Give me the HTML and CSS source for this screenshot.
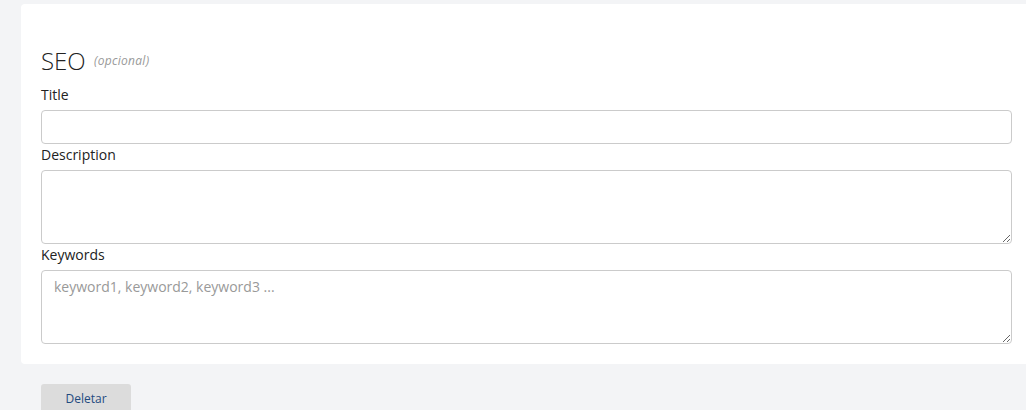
FILE: index.html
```html
<!DOCTYPE html>
<html lang="pt">
<head>
<meta charset="utf-8">
<title>SEO</title>
<link rel="stylesheet" href="styles.css">
</head>
<body>
<div class="page">
  <section class="card">
    <h2 class="card-title">SEO <span class="optional">(opcional)</span></h2>
    <label class="field-label" for="seo-title">Title</label>
    <input class="field-input" id="seo-title" type="text">
    <label class="field-label" for="seo-desc">Description</label>
    <textarea class="field-area" id="seo-desc"></textarea>
    <label class="field-label" for="seo-keys">Keywords</label>
    <textarea class="field-area" id="seo-keys" placeholder="keyword1, keyword2, keyword3 ..."></textarea>
  </section>
  <div class="actions">
    <button class="btn-delete" type="button">Deletar</button>
  </div>
</div>
</body>
</html>
```
FILE: styles.css
```css
html, body {
  margin: 0;
  padding: 0;
  overflow: hidden;
}
body {
  background: #f3f4f6;
  font-family: "Open Sans", "Liberation Sans", sans-serif;
  color: #222;
}
.page {
  padding: 4px 0 0 21px;
  width: 1011px;
}
.card {
  background: #fff;
  border-radius: 4px;
  padding: 20px 20px 20px 20px;
  display: flex;
  flex-direction: column;
}
.card-title {
  margin: 20px 0 8px 0;
  font-size: 24px;
  font-weight: 300;
  line-height: 33px;
  color: #222;
}
.optional {
  font-size: 12px;
  font-style: italic;
  font-weight: 400;
  color: #999;
  letter-spacing: 0.3px;
  margin-left: 2px;
  vertical-align: 5px;
}
.field-label {
  display: block;
  font-size: 14px;
  line-height: 20px;
  margin: 0 0 5px 0;
  color: #222;
}
.field-input,
.field-area {
  box-sizing: border-box;
  width: 100%;
  margin: 0;
  border: 1px solid #cbcbcb;
  border-radius: 4px;
  background: #fff;
  font-family: "Open Sans", "Liberation Sans", sans-serif;
  font-size: 14px;
  color: #333;
  padding: 6px 12px;
  display: block;
}
.field-input {
  height: 34px;
  margin-bottom: 1px;
}
.field-area {
  height: 74px;
  resize: vertical;
  margin-bottom: 1px;
}
.field-area:last-child {
  margin-bottom: 0;
}
.field-area::placeholder {
  color: #999;
}
.actions {
  padding: 20px 0 0 20px;
}
.btn-delete {
  width: 90px;
  height: 34px;
  border: none;
  border-radius: 3px;
  background: #dcdcdc;
  color: #1f4b7f;
  font-family: "Open Sans", "Liberation Sans", sans-serif;
  font-size: 12px;
  padding: 0 0 6px 0;
  display: flex;
  align-items: center;
  justify-content: center;
}
```
